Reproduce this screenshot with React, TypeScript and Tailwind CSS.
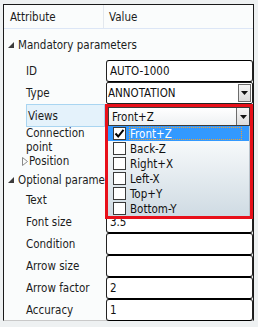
const FONT = "font-['DejaVu_Sans_Condensed','DejaVu_Sans',sans-serif]";

function Expanded() {
  return (
    <svg width="6" height="6" viewBox="0 0 6 6" className="mr-[4px] shrink-0">
      <path d="M6 0 L6 6 L0 6 Z" fill="#3c3c3c" />
    </svg>
  );
}

function Collapsed() {
  return (
    <svg width="6" height="9" viewBox="0 0 6 9" className="mr-[1px] shrink-0">
      <path d="M0.5 0.5 L5.5 4.5 L0.5 8.5 Z" fill="none" stroke="#8a8a8a" />
    </svg>
  );
}

function Arrow() {
  return (
    <svg width="7" height="4" viewBox="0 0 7 4">
      <path d="M0 0 L7 0 L3.5 4 Z" fill="#111" />
    </svg>
  );
}

function Box({ value }: { value?: string }) {
  return (
    <div className="ml-[1px] flex h-full w-[147px] items-center rounded-[3px] border border-[#222] border-t-black border-b-black bg-white px-[3px] text-[#111]">
      {value}
    </div>
  );
}

function Row({
  label,
  h,
  value,
  children,
}: {
  label: string;
  h: string;
  value?: string;
  children?: React.ReactNode;
}) {
  return (
    <div className={`flex ${h}`}>
      <div className="flex w-[101px] shrink-0 items-center pl-[22px] text-[#1c1c1c]">{label}</div>
      <div className="flex-1">{children ?? (value !== undefined ? <Box value={value} /> : null)}</div>
    </div>
  );
}

function Group({ label, h }: { label: string; h: string }) {
  return (
    <div className={`flex items-center whitespace-nowrap pl-[4px] text-[#1c1c1c] ${h}`}>
      <Expanded />
      {label}
    </div>
  );
}

const VIEWS = ["Front+Z", "Back-Z", "Right+X", "Left-X", "Top+Y", "Bottom-Y"];

function Check({ on }: { on?: boolean }) {
  return (
    <div className="flex h-[13px] w-[13px] items-center justify-center border border-[#3a3a3a] bg-white">
      {on && (
        <svg width="11" height="11" viewBox="0 0 11 11">
          <path d="M1.5 5.5 L4.2 8.5 L9.5 1.8" fill="none" stroke="#000" strokeWidth="2" />
        </svg>
      )}
    </div>
  );
}

export default function App() {
  return (
    <div className={`relative h-[327px] w-[258px] overflow-hidden bg-[#eef1f2] text-[11.5px] leading-[14px] ${FONT}`}>
      <div className="ml-[3px] mt-[4px] h-[317px] w-[251px] border border-[#1a1a1a] border-b-[#c9c9c9] bg-[#fafcfc]">
        {/* header */}
        <div className="flex h-[24px] border-b border-[#dce6f6] text-[#1c1c1c]">
          <div className="flex w-[100px] items-center border-r border-[#e3e8ee] pl-[6px]">Attribute</div>
          <div className="flex items-center pl-[5px]">Value</div>
        </div>
        <Group label="Mandatory parameters" h="h-[31px]" />
        <Row label="ID" h="h-[22px]" value="AUTO-1000" />
        <Row label="Type" h="h-[22px]">
          <div className="ml-[1px] flex h-full w-[147px] items-center rounded-[2px] border border-[#222] bg-white">
            <span className="flex-1 pl-[1px] text-[#111]">ANNOTATION</span>
            <div className="mr-[1px] flex h-[18px] w-[13px] items-center justify-center border border-[#6c6c6c] bg-gradient-to-b from-[#f6f6f6] to-[#dcdcdc]">
              <Arrow />
            </div>
          </div>
        </Row>
        <div className="flex h-[23px]">
          <div className="ml-[22px] flex w-[79px] items-center border border-[#a9d5f1] bg-[#e4f2fb] pl-[1px] text-[#1c1c1c]">
            Views
          </div>
        </div>
        <div className="flex h-[25px] flex-col justify-center pl-[22px] text-[#1c1c1c]">
          <span>Connection</span>
          <span>point</span>
        </div>
        <div className="flex h-[18px] items-center pl-[18px] text-[#1c1c1c]">
          <Collapsed />
          Position
        </div>
        <Group label="Optional parameters" h="h-[19px]" />
        <Row label="Text" h="h-[22px]" value="" />
        <Row label="Font size" h="h-[22px]" value="3.5" />
        <Row label="Condition" h="h-[22px]" value="" />
        <Row label="Arrow size" h="h-[22px]" value="" />
        <Row label="Arrow factor" h="h-[22px]" value="2" />
        <Row label="Accuracy" h="h-[22px]" value="1" />
      </div>

      {/* open multi-select dropdown, highlighted */}
      <div className="absolute left-[105px] top-[104px] flex h-[115px] w-[148px] flex-col border-[3px] border-[#e8101a] bg-white">
        <div className="flex h-[19px] items-center border border-[#3a3a3a] bg-gradient-to-b from-[#ffffff] to-[#eef1f3]">
          <span className="flex-1 pl-[3px] text-[#111]">Front+Z</span>
          <div className="flex h-full w-[13px] items-center justify-center border-l border-[#6c6c6c] bg-gradient-to-b from-[#f6f6f6] to-[#dcdcdc]">
            <Arrow />
          </div>
        </div>
        <div className="flex flex-1 flex-col border-r border-[#b9c4cc] bg-gradient-to-b from-[#ffffff] to-[#cfdbe3]">
          {VIEWS.map((v, i) => (
            <div
              key={v}
              className={`flex h-[15px] items-center pl-[5px] ${i === 0 ? "bg-[#3399ff] text-white" : "text-[#111]"}`}
            >
              <Check on={i === 0} />
              <span
                className={`ml-[3px] flex h-[13px] items-center pr-[2px] ${
                  i === 0 ? "w-[113px] border border-dotted border-[#f0a030]" : "pl-[1px]"
                }`}
              >
                {v}
              </span>
            </div>
          ))}
        </div>
      </div>
    </div>
  );
}
